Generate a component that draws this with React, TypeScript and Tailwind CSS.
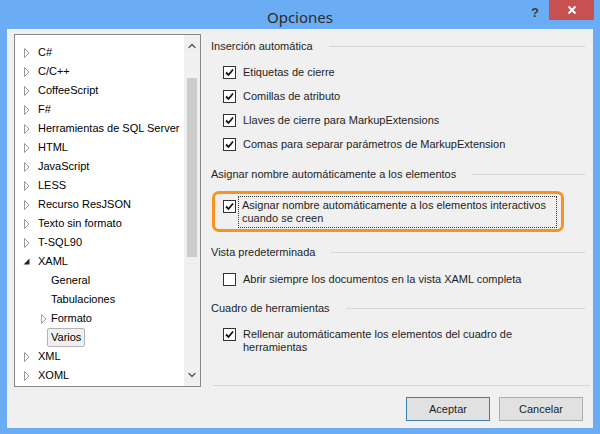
import { ChevronUp, ChevronDown } from "lucide-react";

const font = { fontFamily: '"Liberation Sans", Arial, sans-serif' };

type Node = { label: string; depth: number; arrow: "closed" | "open" | "none"; selected?: boolean };

const tree: Node[] = [
  { label: "C#", depth: 0, arrow: "closed" },
  { label: "C/C++", depth: 0, arrow: "closed" },
  { label: "CoffeeScript", depth: 0, arrow: "closed" },
  { label: "F#", depth: 0, arrow: "closed" },
  { label: "Herramientas de SQL Server", depth: 0, arrow: "closed" },
  { label: "HTML", depth: 0, arrow: "closed" },
  { label: "JavaScript", depth: 0, arrow: "closed" },
  { label: "LESS", depth: 0, arrow: "closed" },
  { label: "Recurso ResJSON", depth: 0, arrow: "closed" },
  { label: "Texto sin formato", depth: 0, arrow: "closed" },
  { label: "T-SQL90", depth: 0, arrow: "closed" },
  { label: "XAML", depth: 0, arrow: "open" },
  { label: "General", depth: 1, arrow: "none" },
  { label: "Tabulaciones", depth: 1, arrow: "none" },
  { label: "Formato", depth: 1, arrow: "closed" },
  { label: "Varios", depth: 1, arrow: "none", selected: true },
  { label: "XML", depth: 0, arrow: "closed" },
  { label: "XOML", depth: 0, arrow: "closed" },
];

function Arrow({ kind }: { kind: Node["arrow"] }) {
  if (kind === "none") return null;
  if (kind === "open")
    return (
      <svg width="7" height="7" viewBox="0 0 7 7">
        <path d="M6.5 0.5 L6.5 6.5 L0.5 6.5 Z" fill="#262626" />
      </svg>
    );
  return (
    <svg width="6" height="10" viewBox="0 0 6 10">
      <path d="M0.5 0.5 L5 5 L0.5 9.5 Z" fill="none" stroke="#9a9a9a" />
    </svg>
  );
}

function Check({ checked }: { checked: boolean }) {
  return (
    <span className="w-[13px] h-[13px] border border-[#333333] bg-white flex items-center justify-center shrink-0">
      {checked && (
        <svg width="9" height="9" viewBox="0 0 9 9">
          <path d="M1 4.5 L3.5 7 L8 1.5" fill="none" stroke="#111" strokeWidth="1.8" />
        </svg>
      )}
    </span>
  );
}

function Heading({ text }: { text: string }) {
  return (
    <div className="flex items-center h-[16px] pr-[8px]">
      <span className="text-[11px] text-[#1e1e1e] whitespace-nowrap">{text}</span>
      <span className="flex-1 h-px bg-[#d5d5d5] ml-[16px]" />
    </div>
  );
}

function Option({ text, checked }: { text: string; checked: boolean }) {
  return (
    <div className="flex items-center h-[24px] pl-[12px] gap-[7px]">
      <Check checked={checked} />
      <span className="text-[11px] text-[#1e1e1e] whitespace-nowrap">{text}</span>
    </div>
  );
}

export default function App() {
  return (
    <div className="w-[600px] h-[434px] bg-[#6badf5] flex flex-col" style={font}>
      {/* TITLE BAR */}
      <div className="h-[29px] relative flex justify-center items-start">
        <span className="mt-[6px] text-[15px] text-[#2b2b2b]" style={{ fontFamily: '"Noto Sans", sans-serif' }}>
          Opciones
        </span>
        <span className="absolute left-[531px] top-[3px] text-[13px] font-bold text-[#3a3a3a]">?</span>
        <div className="absolute left-[549px] top-0 w-[45px] h-[20px] bg-[#c75050] flex items-center justify-center">
          <svg width="10" height="10" viewBox="0 0 10 10">
            <path d="M1.5 1.5 L8.5 8.5 M8.5 1.5 L1.5 8.5" stroke="white" strokeWidth="2" />
          </svg>
        </div>
      </div>

      {/* BODY */}
      <div className="flex-1 mx-[7px] mb-[6px] bg-[#f0f0f0] flex">
        {/* TREE */}
        <div className="ml-[7px] mt-[5px] w-[187px] h-[353px] shrink-0 border border-[#828790] bg-white flex overflow-hidden">
          <div className="flex-1 min-w-0 pt-[8px] flex flex-col">
            {tree.map((n) => (
              <div key={n.label} className="h-[19px] flex items-center">
                <div className={`flex items-center justify-center w-[7px] ${n.depth ? "ml-[25px]" : "ml-[8px]"}`}>
                  <Arrow kind={n.arrow} />
                </div>
                <span
                  className={`text-[11px] text-black whitespace-nowrap ${
                    n.selected
                      ? "ml-0 px-[3px] h-[19px] leading-[17px] border border-[#b4b4b4] bg-[#f0f0f0] rounded-[2px]"
                      : n.depth
                        ? "ml-[4px]"
                        : "ml-[8px]"
                  }`}
                >
                  {n.label}
                </span>
              </div>
            ))}
          </div>
          {/* SCROLLBAR */}
          <div className="w-[16px] shrink-0 bg-[#f0f0f0] flex flex-col items-center">
            <ChevronUp className="w-[12px] h-[12px] mt-[5px] text-[#606060]" strokeWidth={3} />
            <div className="mt-[26px] w-[10px] h-[179px] bg-[#cdcdcd]" />
            <div className="flex-1" />
            <ChevronDown className="w-[12px] h-[12px] mb-[5px] text-[#606060]" strokeWidth={3} />
          </div>
        </div>

        {/* SETTINGS */}
        <div className="flex-1 ml-[10px] flex flex-col">
          <div className="mt-[9px]">
            <Heading text="Inserción automática" />
          </div>
          <div className="mt-[6px]">
            <Option checked text="Etiquetas de cierre" />
            <Option checked text="Comillas de atributo" />
            <Option checked text="Llaves de cierre para MarkupExtensions" />
            <Option checked text="Comas para separar parámetros de MarkupExtension" />
          </div>

          <div className="mt-[10px]">
            <Heading text="Asignar nombre automáticamente a los elementos" />
          </div>
          <div className="mt-[9px] ml-px w-[352px] h-[41px] border-[3px] border-[#f7931e] rounded-[7px] flex items-start pl-[8px] pt-[6px]">
            <Check checked />
            <div className="ml-[2px] -mt-[4px] px-[3px] py-[2px] w-[319px] border border-dotted border-[#333] text-[11px] leading-[13px] text-[#1e1e1e] whitespace-nowrap">
              Asignar nombre automáticamente a los elementos interactivos
              <br />
              cuando se creen
            </div>
          </div>

          <div className="mt-[12px]">
            <Heading text="Vista predeterminada" />
          </div>
          <div className="mt-[7px]">
            <Option checked={false} text="Abrir siempre los documentos en la vista XAML completa" />
          </div>

          <div className="mt-[9px]">
            <Heading text="Cuadro de herramientas" />
          </div>
          <div className="mt-[12px] flex items-start pl-[12px] gap-[7px]">
            <Check checked />
            <span className="text-[11px] leading-[13px] text-[#1e1e1e] whitespace-nowrap">
              Rellenar automáticamente los elementos del cuadro de
              <br />
              herramientas
            </span>
          </div>

          <div className="flex-1" />
          <div className="ml-[2px] mr-[3px] h-px bg-[#d5d5d5]" />
          <div className="mt-[11px] mb-[7px] flex justify-end gap-[9px] pr-[10px]">
            <button className="w-[84px] h-[24px] border border-[#3c7fb1] bg-[#e1e1e1] text-[11px] text-[#1e1e1e]">
              Aceptar
            </button>
            <button className="w-[84px] h-[24px] border border-[#adadad] bg-[#e1e1e1] text-[11px] text-[#1e1e1e]">
              Cancelar
            </button>
          </div>
        </div>
      </div>
    </div>
  );
}
